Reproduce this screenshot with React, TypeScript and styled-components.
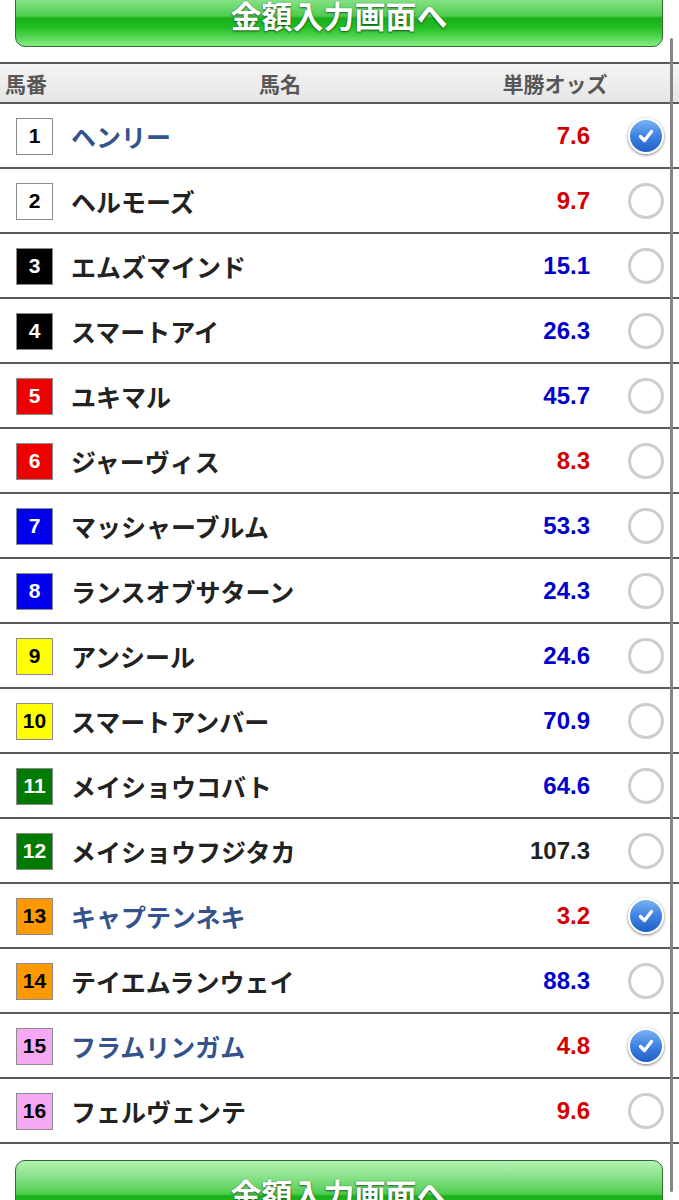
import React from 'react'
import styled, { createGlobalStyle } from 'styled-components'

const GlobalStyle = createGlobalStyle`
  html, body {
    margin: 0;
    padding: 0;
    background: #ffffff;
  }
  body {
    font-family: 'Liberation Sans', 'Noto Sans CJK JP', sans-serif;
  }
`

const Page = styled.div`
  position: relative;
  width: 679px;
  height: 1200px;
  overflow: hidden;
  background: #ffffff;
`

const ScrollIndicator = styled.div`
  position: absolute;
  top: 38px;
  left: 670px;
  width: 3px;
  height: 1154px;
  border-radius: 2px;
  background: #858585;
`

const SubmitButton = styled.div<{ top?: boolean }>`
  box-sizing: border-box;
  height: 65px;
  margin: ${(props) => (props.top ? '-18px 16px 15px 15px' : '16px 16px 0 15px')};
  border: 1px solid #2f6a2f;
  border-radius: 10px;
  display: flex;
  align-items: center;
  justify-content: center;
  background: linear-gradient(
    to bottom,
    #b4f2b4 0%,
    #7fdf7f 30%,
    #4fcd4f 52%,
    #1aaf1a 56%,
    #22bd22 70%,
    #5ad95a 88%,
    #86ec86 100%
  );
  color: #ffffff;
  font-family: 'Noto Sans CJK JP', sans-serif;
  font-weight: 700;
  font-size: 31px;
  text-shadow: 0 1px 2px rgba(0, 0, 0, 0.55), 0 0 1px rgba(0, 0, 0, 0.4);
`

const HeaderRow = styled.div`
  box-sizing: border-box;
  height: 42px;
  display: flex;
  align-items: center;
  border-top: 2px solid #5a5a5a;
  border-bottom: 2px solid #5a5a5a;
  background: linear-gradient(to bottom, #f4f4f4, #e6e6e6);
  color: #575757;
  font-family: 'Noto Sans CJK JP', sans-serif;
  font-weight: 700;
  font-size: 21px;
`

const HeaderCell = styled.div<{ width: number; align: string; pad?: number }>`
  width: ${(props) => props.width}px;
  text-align: ${(props) => props.align};
  padding-left: ${(props) => props.pad || 0}px;
  box-sizing: border-box;
  flex-shrink: 0;
`

const Row = styled.div`
  box-sizing: border-box;
  height: 65px;
  display: flex;
  align-items: center;
  border-bottom: 2px solid #5a5a5a;
  padding-top: 1px;
`

const NumberBox = styled.div<{ bg: string; fg: string }>`
  box-sizing: border-box;
  width: 37px;
  height: 37px;
  margin-left: 16px;
  flex-shrink: 0;
  display: flex;
  align-items: center;
  justify-content: center;
  border: 1px solid #8c8c8c;
  background: ${(props) => props.bg};
  color: ${(props) => props.fg};
  font-family: 'Liberation Sans', sans-serif;
  font-weight: 700;
  font-size: 21px;
`

const HorseName = styled.div<{ selected: boolean }>`
  flex: 1;
  margin-left: 18px;
  font-family: 'Noto Sans CJK JP', sans-serif;
  font-weight: 700;
  font-size: 25px;
  color: ${(props) => (props.selected ? '#34538c' : '#222222')};
  white-space: nowrap;
`

const Odds = styled.div<{ color: string }>`
  width: 110px;
  margin-right: 38px;
  text-align: right;
  font-family: 'Liberation Sans', sans-serif;
  font-weight: 700;
  font-size: 24px;
  color: ${(props) => props.color};
`

const Radio = styled.div<{ checked: boolean }>`
  box-sizing: border-box;
  width: 36px;
  height: 36px;
  margin-right: 15px;
  flex-shrink: 0;
  border-radius: 50%;
  display: flex;
  align-items: center;
  justify-content: center;
  border: ${(props) => (props.checked ? '2px solid #ffffff' : '3px solid #cdcdcd')};
  background: ${(props) =>
    props.checked ? 'linear-gradient(to bottom, #79b2f3 0%, #3f82e0 50%, #1f5fc8 100%)' : '#ffffff'};
  box-shadow: ${(props) => (props.checked ? '0 1px 3px rgba(0,0,0,0.55)' : 'none')};
`

interface Horse {
  no: number
  name: string
  odds: string
  checked?: boolean
}

const horses: Horse[] = [
  { no: 1, name: 'ヘンリー', odds: '7.6', checked: true },
  { no: 2, name: 'ヘルモーズ', odds: '9.7' },
  { no: 3, name: 'エムズマインド', odds: '15.1' },
  { no: 4, name: 'スマートアイ', odds: '26.3' },
  { no: 5, name: 'ユキマル', odds: '45.7' },
  { no: 6, name: 'ジャーヴィス', odds: '8.3' },
  { no: 7, name: 'マッシャーブルム', odds: '53.3' },
  { no: 8, name: 'ランスオブサターン', odds: '24.3' },
  { no: 9, name: 'アンシール', odds: '24.6' },
  { no: 10, name: 'スマートアンバー', odds: '70.9' },
  { no: 11, name: 'メイショウコバト', odds: '64.6' },
  { no: 12, name: 'メイショウフジタカ', odds: '107.3' },
  { no: 13, name: 'キャプテンネキ', odds: '3.2', checked: true },
  { no: 14, name: 'テイエムランウェイ', odds: '88.3' },
  { no: 15, name: 'フラムリンガム', odds: '4.8', checked: true },
  { no: 16, name: 'フェルヴェンテ', odds: '9.6' },
]

// 枠の色 (1枠〜8枠)
const frameColors: [string, string][] = [
  ['#ffffff', '#000000'],
  ['#000000', '#ffffff'],
  ['#ee0000', '#ffffff'],
  ['#0000ee', '#ffffff'],
  ['#ffff00', '#000000'],
  ['#007a00', '#ffffff'],
  ['#ff9900', '#000000'],
  ['#f7a8f2', '#000000'],
]

const oddsColor = (odds: string): string => {
  const v = parseFloat(odds)
  if (v < 10) return '#d40000'
  if (v < 100) return '#0000cc'
  return '#222222'
}

const CheckMark = () => (
  <svg width="20" height="20" viewBox="0 0 20 20">
    <path
      d="M4.5 10.5 L8.5 14.5 L15.5 5.5"
      fill="none"
      stroke="#ffffff"
      strokeWidth="3.4"
      strokeLinecap="round"
      strokeLinejoin="round"
    />
  </svg>
)

const App = (): React.ReactElement => {
  return (
    <Page>
      <GlobalStyle />
      <SubmitButton top>金額入力画面へ</SubmitButton>
      <HeaderRow>
        <HeaderCell width={60} align="left" pad={5}>
          馬番
        </HeaderCell>
        <HeaderCell width={440} align="center">
          馬名
        </HeaderCell>
        <HeaderCell width={110} align="center">
          単勝オッズ
        </HeaderCell>
      </HeaderRow>
      {horses.map((horse) => {
        const [bg, fg] = frameColors[Math.floor((horse.no - 1) / 2)]
        return (
          <Row key={horse.no}>
            <NumberBox bg={bg} fg={fg}>
              {horse.no}
            </NumberBox>
            <HorseName selected={!!horse.checked}>{horse.name}</HorseName>
            <Odds color={oddsColor(horse.odds)}>{horse.odds}</Odds>
            <Radio checked={!!horse.checked}>{horse.checked && <CheckMark />}</Radio>
          </Row>
        )
      })}
      <SubmitButton>金額入力画面へ</SubmitButton>
      <ScrollIndicator />
    </Page>
  )
}

export default App
